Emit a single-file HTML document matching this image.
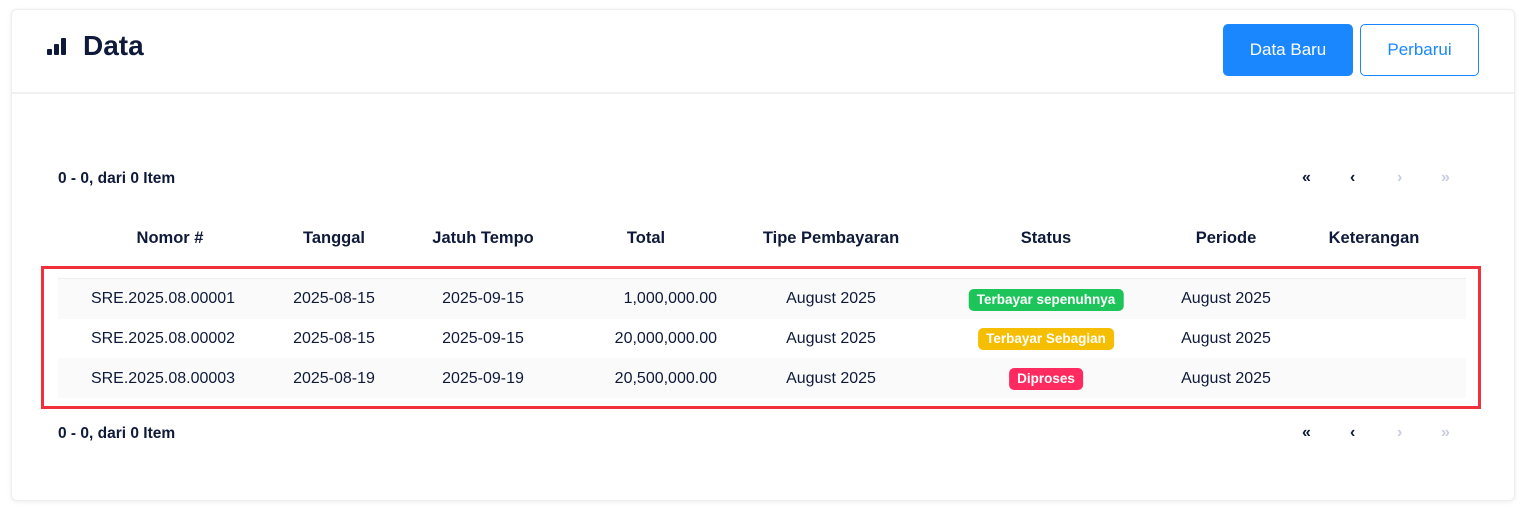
<!DOCTYPE html><html><head><style>
body{margin:0;width:1530px;height:509px;background:#fff;font-family:"Liberation Sans",sans-serif;color:#0f1a3a;position:relative;overflow:hidden}
.card{position:absolute;left:11px;top:9px;width:1502px;height:490px;border:1px solid #eee;border-radius:6px;box-shadow:0 1px 4px rgba(0,0,0,.08)}
.sep{position:absolute;left:11px;top:92px;width:1503px;height:2px;background:#f0f0f0}
.t{position:absolute;white-space:nowrap}
.btn{position:absolute;top:24px;height:52px;border-radius:5px;font-size:17px;display:flex;align-items:center;justify-content:center;box-sizing:border-box}
.h{font-weight:bold;font-size:16.5px;transform:translateX(-50%);top:229px}
.c{font-size:16px;transform:translateX(-50%)}
.row{position:absolute;left:58px;width:1408px;height:40px}
.b{position:absolute;transform:translateX(-50%);color:#fff;font-weight:bold;font-size:13.5px;padding:0 8px;height:22px;line-height:22px;border-radius:5px}
.pg{position:absolute;font-size:16px;font-weight:bold}
</style></head><body>
<div class="card"></div><div class="sep"></div>
<svg style="position:absolute;left:47px;top:38px" width="20" height="18"><rect x="0" y="11" width="5" height="6" rx="1" fill="#0f1a3a"/><rect x="7" y="6" width="5" height="11" rx="1" fill="#0f1a3a"/><rect x="14" y="0" width="5" height="17" rx="1" fill="#0f1a3a"/></svg>
<div class="t" style="left:83px;top:30px;font-size:28px;font-weight:bold">Data</div>
<div class="btn" style="left:1223px;width:130px;background:#1a87ff;color:#fff">Data Baru</div>
<div class="btn" style="left:1360px;width:119px;border:1px solid #1a87ff;color:#1a87ff">Perbarui</div>
<div class="t" style="left:58px;top:170px;font-size:15.5px;font-weight:bold">0 - 0, dari 0 Item</div>
<div class="t" style="left:58px;top:425px;font-size:15.5px;font-weight:bold">0 - 0, dari 0 Item</div>
<div class="pg" style="left:1302px;top:169px">«</div><div class="pg" style="left:1350px;top:169px">‹</div><div class="pg" style="left:1397px;top:169px;color:#c8cde0">›</div><div class="pg" style="left:1441px;top:169px;color:#c8cde0">»</div>
<div class="pg" style="left:1302px;top:424px">«</div><div class="pg" style="left:1350px;top:424px">‹</div><div class="pg" style="left:1397px;top:424px;color:#c8cde0">›</div><div class="pg" style="left:1441px;top:424px;color:#c8cde0">»</div>
<div class="t h" style="left:170px">Nomor #</div><div class="t h" style="left:334px">Tanggal</div><div class="t h" style="left:483px">Jatuh Tempo</div><div class="t h" style="left:646px">Total</div><div class="t h" style="left:831px">Tipe Pembayaran</div><div class="t h" style="left:1046px">Status</div><div class="t h" style="left:1226px">Periode</div><div class="t h" style="left:1374px">Keterangan</div>
<div style="position:absolute;left:41px;top:266px;width:1434px;height:137px;border:3px solid #f0303a"></div>
<div class="row" style="top:278px;background:#fafafa;border-top:1px solid #eee"></div>
<div class="row" style="top:358px;background:#fafafa"></div>
<div class="t c" style="left:163px;top:290px">SRE.2025.08.00001</div><div class="t c" style="left:334px;top:290px">2025-08-15</div><div class="t c" style="left:483px;top:290px">2025-09-15</div><div class="t" style="right:813px;top:290px;font-size:16px">1,000,000.00</div><div class="t c" style="left:831px;top:290px">August 2025</div><div class="b" style="left:1046px;top:289px;background:#1dc45a">Terbayar sepenuhnya</div><div class="t c" style="left:1226px;top:290px">August 2025</div>
<div class="t c" style="left:163px;top:330px">SRE.2025.08.00002</div><div class="t c" style="left:334px;top:330px">2025-08-15</div><div class="t c" style="left:483px;top:330px">2025-09-15</div><div class="t" style="right:813px;top:330px;font-size:16px">20,000,000.00</div><div class="t c" style="left:831px;top:330px">August 2025</div><div class="b" style="left:1046px;top:328px;background:#f6be00">Terbayar Sebagian</div><div class="t c" style="left:1226px;top:330px">August 2025</div>
<div class="t c" style="left:163px;top:370px">SRE.2025.08.00003</div><div class="t c" style="left:334px;top:370px">2025-08-19</div><div class="t c" style="left:483px;top:370px">2025-09-19</div><div class="t" style="right:813px;top:370px;font-size:16px">20,500,000.00</div><div class="t c" style="left:831px;top:370px">August 2025</div><div class="b" style="left:1046px;top:368px;background:#ff2a5f">Diproses</div><div class="t c" style="left:1226px;top:370px">August 2025</div>
</body></html>
